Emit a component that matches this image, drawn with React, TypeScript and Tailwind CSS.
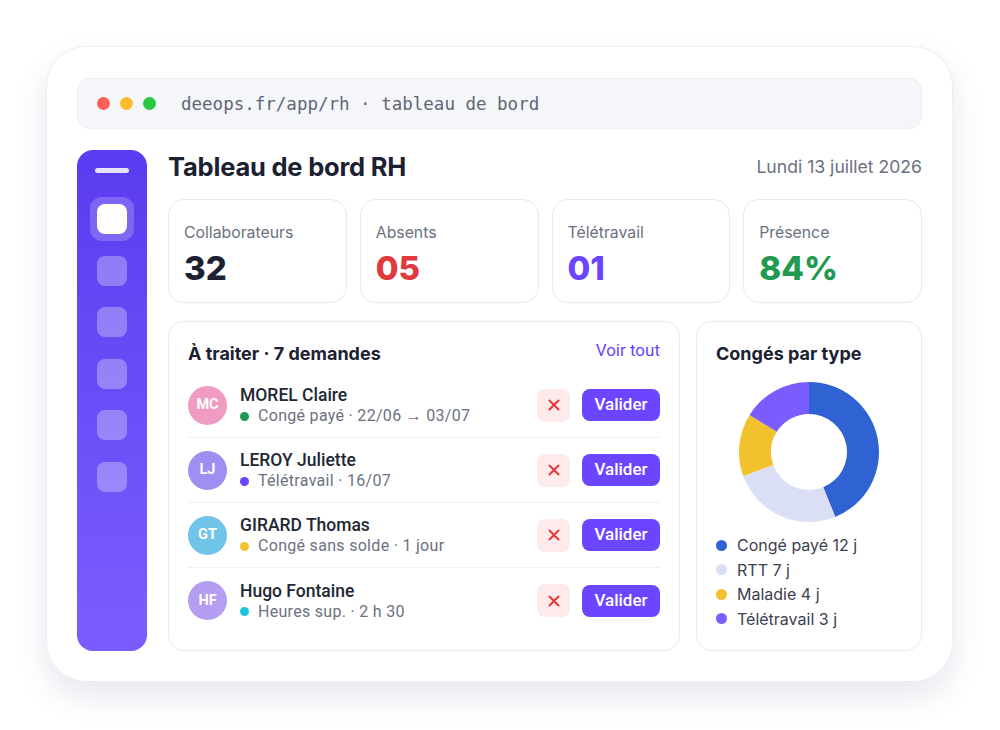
import React from "react";

const stats = [
  { label: "Collaborateurs", value: "32", color: "text-[#1b2130]" },
  { label: "Absents", value: "05", color: "text-[#e0393e]" },
  { label: "Télétravail", value: "01", color: "text-[#6b45ff]" },
  { label: "Présence", value: "84%", color: "text-[#1f9a50]" },
];

const requests = [
  { initials: "MC", avatar: "bg-[#f09bc1]", name: "MOREL Claire", dot: "bg-[#1f9a50]", detail: "Congé payé · 22/06 → 03/07" },
  { initials: "LJ", avatar: "bg-[#a08ff2]", name: "LEROY Juliette", dot: "bg-[#6b45ff]", detail: "Télétravail · 16/07" },
  { initials: "GT", avatar: "bg-[#6fc4e8]", name: "GIRARD Thomas", dot: "bg-[#f2c12e]", detail: "Congé sans solde · 1 jour" },
  { initials: "HF", avatar: "bg-[#b59df2]", name: "Hugo Fontaine", dot: "bg-[#1cc6da]", detail: "Heures sup. · 2 h 30" },
];

const legend = [
  { label: "Congé payé 12 j", dot: "bg-[#2f62d3]" },
  { label: "RTT 7 j", dot: "bg-[#dadff6]" },
  { label: "Maladie 4 j", dot: "bg-[#f2c12e]" },
  { label: "Télétravail 3 j", dot: "bg-[#7b5cff]" },
];

// donut segments, angles in degrees clockwise from top
const segments = [
  { from: 0, to: 158, color: "#2f62d3" },
  { from: 158, to: 250, color: "#dadff6" },
  { from: 250, to: 302, color: "#f2c12e" },
  { from: 302, to: 360, color: "#7b5cff" },
];

function arc(from: number, to: number, r1: number, r2: number, c: number) {
  const p = (a: number, r: number) => {
    const rad = ((a - 90) * Math.PI) / 180;
    return `${(c + r * Math.cos(rad)).toFixed(2)} ${(c + r * Math.sin(rad)).toFixed(2)}`;
  };
  const large = to - from > 180 ? 1 : 0;
  return `M ${p(from, r2)} A ${r2} ${r2} 0 ${large} 1 ${p(to, r2)} L ${p(to, r1)} A ${r1} ${r1} 0 ${large} 0 ${p(from, r1)} Z`;
}

function Donut() {
  return (
    <svg width="140" height="140" viewBox="0 0 140 140">
      {segments.map((s) => (
        <path key={s.from} d={arc(s.from, s.to, 38, 70, 70)} fill={s.color} />
      ))}
    </svg>
  );
}

export default function App() {
  return (
    <div className="w-full h-[730px] bg-white pt-[46px] pl-[46px]" style={{ fontFamily: "Inter, sans-serif" }}>
      <div className="w-[907px] h-[636px] bg-white rounded-[40px] border border-[#eceef5] shadow-[0_14px_30px_rgba(70,70,130,0.13)] pt-[31px] px-[30px] pb-[30px] flex flex-col">
        {/* URL bar */}
        <div className="h-[51px] rounded-[13px] bg-[#f5f6fa] border border-[#eceef4] flex items-center pl-[19px]">
          <div className="flex gap-[10px]">
            <span className="w-[13px] h-[13px] rounded-full bg-[#fe5f57]" />
            <span className="w-[13px] h-[13px] rounded-full bg-[#febc2e]" />
            <span className="w-[13px] h-[13px] rounded-full bg-[#28c840]" />
          </div>
          <span className="ml-[25px] text-[17.5px] text-[#5f6675] mt-[2px]" style={{ fontFamily: "'DejaVu Sans Mono', monospace" }}>
            deeops.fr/app/rh · tableau de bord
          </span>
        </div>

        <div className="flex mt-[21px] flex-1 gap-[21px]">
          {/* Sidebar */}
          <div className="w-[70px] rounded-[16px] bg-gradient-to-b from-[#5b3bef] to-[#7b5dff] flex flex-col items-center pt-[18px]">
            <div className="w-[34px] h-[5px] rounded-full bg-white/85" />
            <div className="mt-[24px] flex flex-col gap-[7.6px]">
              <div className="w-[44px] h-[44px] rounded-[12px] bg-white/20 flex items-center justify-center">
                <div className="w-[30px] h-[30px] rounded-[8px] bg-white" />
              </div>
              {[0, 1, 2, 3, 4].map((i) => (
                <div key={i} className="w-[44px] h-[44px] flex items-center justify-center">
                  <div className="w-[30px] h-[30px] rounded-[8px] bg-white/30" />
                </div>
              ))}
            </div>
          </div>

          {/* Main */}
          <div className="flex-1 flex flex-col">
            <div className="flex items-center justify-between h-[34px]">
              <h1 className="text-[25.5px] font-bold text-[#1b2130] tracking-[-0.2px]">Tableau de bord RH</h1>
              <span className="text-[17.6px] text-[#6b7180]">Lundi 13 juillet 2026</span>
            </div>

            <div className="grid grid-cols-4 gap-[13px] mt-[15px]">
              {stats.map((s) => (
                <div key={s.label} className="h-[104px] rounded-[16px] border border-[#e8eaf3] pl-[15px] pt-[23px]">
                  <div className="text-[15.8px] text-[#6b7180] leading-[20px]">{s.label}</div>
                  <div className={`text-[33px] font-extrabold leading-[40px] mt-[5px] ${s.color}`}>{s.value}</div>
                </div>
              ))}
            </div>

            <div className="flex gap-[16px] mt-[18px] flex-1">
              {/* Requests */}
              <div className="w-[512px] rounded-[16px] border border-[#e8eaf3] px-[19px] pt-[18px]">
                <div className="flex items-center justify-between h-[26px]">
                  <span className="text-[18px] font-bold text-[#1b2130]">À traiter · 7 demandes</span>
                  <span className="text-[17px] text-[#6b45ff] -mt-[4px]" style={{ fontFamily: "Roboto, sans-serif" }}>Voir tout</span>
                </div>
                <div className="mt-[7px] flex flex-col" style={{ fontFamily: "Roboto, sans-serif" }}>
                  {requests.map((r, i) => (
                    <div
                      key={r.name}
                      className={`h-[65px] flex items-center ${i < requests.length - 1 ? "border-b border-[#eef0f5]" : ""}`}
                    >
                      <div className={`w-[39px] h-[39px] rounded-full ${r.avatar} flex items-center justify-center text-white text-[14.5px] font-bold`}>
                        {r.initials}
                      </div>
                      <div className="ml-[13px] flex-1">
                        <div className="text-[17.5px] font-medium text-[#222733] leading-[22px]">{r.name}</div>
                        <div className="flex items-center text-[16px] text-[#6b7180] leading-[20px] tracking-[0.3px]">
                          <span className={`w-[9px] h-[9px] rounded-full ${r.dot} mr-[9px]`} />
                          {r.detail}
                        </div>
                      </div>
                      <button className="w-[33px] h-[33px] rounded-[8px] bg-[#fdeaea] flex items-center justify-center">
                        <svg width="12" height="12" viewBox="0 0 12 12">
                          <path d="M1.5 1.5L10.5 10.5M10.5 1.5L1.5 10.5" stroke="#e5383b" strokeWidth="2" strokeLinecap="round" />
                        </svg>
                      </button>
                      <button className="ml-[12px] w-[78px] h-[32px] rounded-[8px] bg-[#6b45ff] text-white text-[17px] font-medium">
                        Valider
                      </button>
                    </div>
                  ))}
                </div>
              </div>

              {/* Chart */}
              <div className="flex-1 rounded-[16px] border border-[#e8eaf3] px-[19px] pt-[19px]">
                <div className="text-[18px] font-bold text-[#1b2130] leading-[26px]">Congés par type</div>
                <div className="flex justify-center mt-[15px]">
                  <Donut />
                </div>
                <div className="mt-[13px] flex flex-col gap-[4px]">
                  {legend.map((l) => (
                    <div key={l.label} className="flex items-center h-[20.5px]">
                      <span className={`w-[11px] h-[11px] rounded-full ${l.dot}`} />
                      <span className="ml-[10px] text-[16px] text-[#3c4150]">{l.label}</span>
                    </div>
                  ))}
                </div>
              </div>
            </div>
          </div>
        </div>
      </div>
    </div>
  );
}
